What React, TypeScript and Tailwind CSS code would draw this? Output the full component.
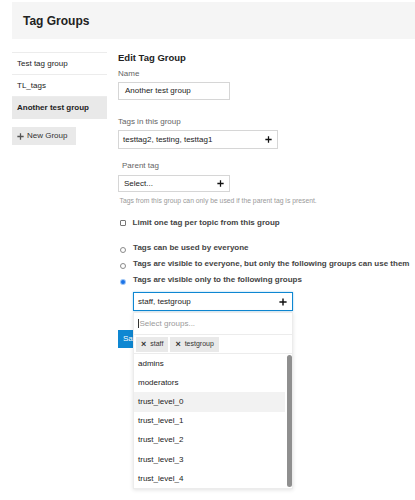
const groups = ["Test tag group", "TL_tags", "Another test group"];
const options = [
  "admins",
  "moderators",
  "trust_level_0",
  "trust_level_1",
  "trust_level_2",
  "trust_level_3",
  "trust_level_4",
];
const visibility = [
  "Tags can be used by everyone",
  "Tags are visible to everyone, but only the following groups can use them",
  "Tags are visible only to the following groups",
];

function Plus({ className = "" }: { className?: string }) {
  return (
    <svg viewBox="0 0 10 10" className={className} aria-hidden>
      <path d="M5 0.5v9M0.5 5h9" stroke="currentColor" strokeWidth="1.8" />
    </svg>
  );
}

function Radio({ checked }: { checked?: boolean }) {
  return checked ? (
    <span className="mt-[4.3px] flex h-[6px] w-[6px] shrink-0 items-center justify-center rounded-full bg-[#9cc4f5]">
      <span className="h-[4px] w-[4px] rounded-full bg-[#1a73e8]" />
    </span>
  ) : (
    <span className="mt-[4.3px] h-[6px] w-[6px] shrink-0 rounded-full border border-[#8a8a8a] bg-white" />
  );
}

export default function App() {
  return (
    <div className="relative h-[500px] w-[415px] overflow-hidden bg-white font-['Liberation_Sans',Arial,sans-serif] text-[#222]">
      <div className="ml-[12px] mt-[2px] flex h-[37px] items-center bg-[#f5f5f5] pl-[11px]">
        <h1 className="text-[12px] font-bold leading-none">Tag Groups</h1>
      </div>

      <div className="ml-[12px] flex">
        {/* group list */}
        <div className="w-[95px] pt-[13px]">
          <div className="border-t border-[#ececec]">
            {groups.map((g, i) => (
              <div
                key={g}
                className={
                  i === 2
                    ? "flex h-[22px] items-center bg-[#e9e9e9] px-[5px] text-[8px] font-bold"
                    : "flex h-[22px] items-center border-b border-[#ececec] px-[5px] text-[8px]"
                }
              >
                {g}
              </div>
            ))}
          </div>
          <button className="mt-[8px] flex h-[18px] w-[64px] items-center gap-[3px] bg-[#e9e9e9] pl-[5px] text-[8px] text-[#333]">
            <Plus className="h-[7px] w-[7px] text-[#555]" />
            New Group
          </button>
        </div>

        {/* edit form */}
        <div className="ml-[11px] pt-[13px]">
          <h2 className="text-[9.5px] font-bold leading-[12px]">Edit Tag Group</h2>

          <div className="mt-[5px] text-[8px] leading-[10px] text-[#646464]">Name</div>
          <div className="mt-[3px] flex h-[18px] w-[112px] items-center border border-[#d6d6d6] pl-[6px] text-[8px]">
            Another test group
          </div>

          <div className="mt-[17px] text-[8px] leading-[10px] text-[#646464]">Tags in this group</div>
          <div className="mt-[3px] flex h-[19px] w-[160px] items-center justify-between border border-[#d6d6d6] pl-[4px] pr-[5px] text-[8px]">
            <span>testtag2, testing, testtag1</span>
            <Plus className="h-[7px] w-[7px] text-[#111]" />
          </div>

          <div className="mt-[12px] pl-[4px] text-[8px] leading-[10px] text-[#646464]">Parent tag</div>
          <div className="mt-[4px] flex h-[17px] w-[112px] items-center justify-between border border-[#d6d6d6] pl-[5px] pr-[5px] text-[8px]">
            <span>Select...</span>
            <Plus className="h-[7px] w-[7px] text-[#111]" />
          </div>
          <div className="mt-[5px] pl-[1.5px] text-[6.8px] leading-[8px] text-[#9a9a9a]">
            Tags from this group can only be used if the parent tag is present.
          </div>

          <label className="mt-[13px] flex h-[10px] items-center pl-[1.6px]">
            <span className="h-[6px] w-[6px] shrink-0 rounded-[1px] border border-[#777] bg-white" />
            <span className="ml-[7px] text-[8px] font-bold leading-[10px] text-[#444]">
              Limit one tag per topic from this group
            </span>
          </label>

          <div className="mt-[14.5px] flex flex-col gap-[6.3px]">
            {visibility.map((v, i) => (
              <label key={v} className="flex h-[10px] items-start pl-[1.6px]">
                <Radio checked={i === 2} />
                <span className="ml-[7.5px] whitespace-nowrap text-[8px] font-bold leading-[10px] text-[#444]">
                  {v}
                </span>
              </label>
            ))}
          </div>

          {/* group chooser with its open dropdown */}
          <div className="relative ml-[15px] mt-[7px] w-[160px]">
            <div className="flex h-[19px] items-center justify-between border border-[#0e87d2] pl-[4px] pr-[5px] text-[8px] shadow-[0_0_2px_rgba(14,135,210,0.4)]">
              <span>staff, testgroup</span>
              <Plus className="h-[8px] w-[8px] text-[#111]" />
            </div>

            <div className="absolute left-0 top-[20px] z-10 w-[160px] border border-[#ececec] bg-white shadow-[0_1px_4px_rgba(0,0,0,0.12)]">
              <div className="flex h-[22px] items-center border-b border-[#ececec] pl-[3.5px] text-[8px] text-[#9a9a9a]">
                <span className="mr-[1px] h-[9px] w-px bg-[#333]" />
                Select groups...
              </div>
              <div className="flex h-[19px] items-center gap-[2px] border-b border-[#ececec] pl-[2px]">
                {["staff", "testgroup"].map((c) => (
                  <span
                    key={c}
                    className="flex h-[15px] items-center gap-[4px] bg-[#e9e9e9] px-[5px] text-[7px] text-[#333]"
                  >
                    <span className="text-[9px] font-bold leading-none">×</span>
                    {c}
                  </span>
                ))}
              </div>
              <div className="relative">
                {options.map((o) => (
                  <div
                    key={o}
                    className={
                      o === "trust_level_0"
                        ? "mr-[7px] flex h-[19.2px] items-center bg-[#f2f2f2] pl-[4px] text-[8px]"
                        : "mr-[7px] flex h-[19.2px] items-center pl-[4px] text-[8px]"
                    }
                  >
                    {o}
                  </div>
                ))}
                <div className="absolute bottom-[1px] right-[0.5px] top-[1px] w-[5px] rounded-full bg-[#8f8f8f]" />
              </div>
            </div>
          </div>

          <button className="mt-[19px] flex h-[18px] items-center bg-[#0e87d2] px-[5px] text-[8px] text-white">
            Save
          </button>
        </div>
      </div>
    </div>
  );
}
